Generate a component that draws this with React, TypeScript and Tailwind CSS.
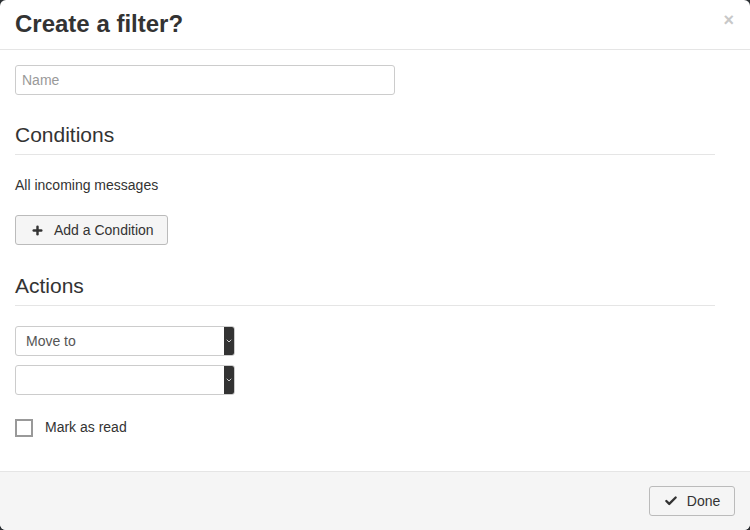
import { Plus, Check, ChevronDown } from "lucide-react";

const FONT = { fontFamily: '"Liberation Sans", Arial, sans-serif' };

function SectionTitle({ children }: { children: string }) {
  return (
    <div className="mr-[35px] border-b border-[#e5e5e5] pb-[7px]">
      <h3 className="text-[21px] leading-[24px] text-[#333]">{children}</h3>
    </div>
  );
}

function FakeSelect({ value }: { value?: string }) {
  return (
    <div className="flex h-[30px] w-[220px] overflow-hidden rounded-[3px] border border-[#ccc] bg-white">
      <div className="flex flex-1 items-center pl-[10px] text-[14px] text-[#555]">{value}</div>
      <div className="flex w-[10px] items-center justify-center bg-[#333]">
        <ChevronDown size={8} strokeWidth={3} className="text-[#ccc]" />
      </div>
    </div>
  );
}

export default function App() {
  return (
    <div className="h-[530px] w-[750px] bg-[#2b2f33]" style={FONT}>
      <div className="flex h-full flex-col overflow-hidden rounded-[6px] bg-white">
        {/* Header */}
        <div className="flex h-[50px] shrink-0 items-start justify-between border-b border-[#e5e5e5] pl-[15px] pr-[16px]">
          <h2 className="pt-[9px] text-[24px] font-bold leading-[30px] text-[#333]">Create a filter?</h2>
          <span className="pt-[10px] text-[18px] font-bold leading-[20px] text-[#c8c8c8]">×</span>
        </div>

        {/* Body */}
        <div className="flex-1 pl-[15px] pt-[15px]">
          <div className="flex h-[30px] w-[380px] items-center rounded-[3px] border border-[#ccc] px-[6px] text-[14px] text-[#999]">
            Name
          </div>

          <div className="mt-[28px]">
            <SectionTitle>Conditions</SectionTitle>
          </div>
          <p className="mt-[20px] text-[14px] leading-[20px] text-[#333]">All incoming messages</p>

          <button className="mt-[20px] flex h-[30px] w-[153px] items-center gap-[10px] rounded-[3px] border border-[#bbb] bg-[#f5f5f5] pl-[15px] text-[14px] text-[#333]">
            <Plus size={13} strokeWidth={4.5} className="text-[#333]" />
            Add a Condition
          </button>

          <div className="mt-[29px]">
            <SectionTitle>Actions</SectionTitle>
          </div>

          <div className="mt-[20px] flex flex-col gap-[9px]">
            <FakeSelect value="Move to" />
            <FakeSelect />
          </div>

          <label className="mt-[22px] flex items-center gap-[12px]">
            <span className="h-[18px] w-[18px] border-2 border-[#999] bg-white" />
            <span className="text-[14px] text-[#333]">Mark as read</span>
          </label>
        </div>

        {/* Footer */}
        <div className="flex h-[59px] shrink-0 items-center justify-end border-t border-[#e5e5e5] bg-[#f5f5f5] pr-[15px]">
          <button className="flex h-[30px] w-[86px] items-center justify-center gap-[9px] rounded-[3px] border border-[#bbb] bg-[#f5f5f5] text-[14px] text-[#333]">
            <Check size={14} strokeWidth={4} className="text-[#333]" />
            Done
          </button>
        </div>
      </div>
    </div>
  );
}
